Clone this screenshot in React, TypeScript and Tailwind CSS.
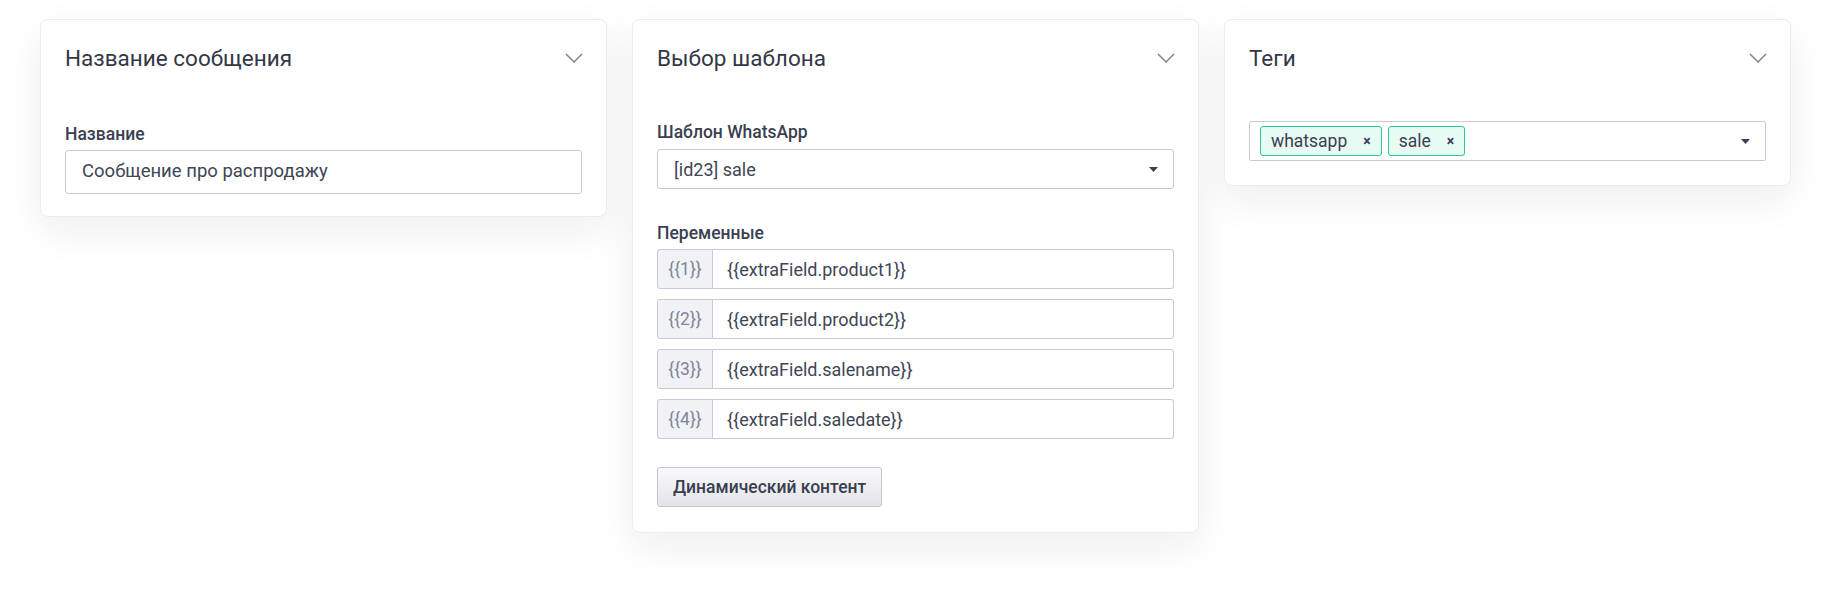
import React from "react";

const Chevron = () => (
	<svg width="18" height="10" viewBox="0 0 18 10" fill="none" className="mr-[-1px]">
		<polyline points="1,1 9,9 17,1" stroke="#7d8597" strokeWidth="1.5" />
	</svg>
);

const Caret = () => (
	<svg width="9" height="5" viewBox="0 0 9 5">
		<polygon points="0,0 9,0 4.5,5" fill="#3a3f51" />
	</svg>
);

function Card({ title, className, children }: { title: string; className?: string; children: React.ReactNode }) {
	return (
		<div
			className={
				"rounded-lg border border-[#ececf0] bg-white px-6 pt-6 shadow-[0_14px_40px_rgba(30,35,60,0.07)] " +
				(className ?? "")
			}
		>
			<div className="flex h-7 items-center justify-between">
				<h2 className="text-[22.5px] leading-7 text-[#333846]">{title}</h2>
				<Chevron />
			</div>
			{children}
		</div>
	);
}

const Label = ({ children }: { children: React.ReactNode }) => (
	<div className="text-[17.5px] font-medium leading-6 text-[#3a3f51]">{children}</div>
);

const variables = [
	{ key: "{{1}}", value: "{{extraField.product1}}" },
	{ key: "{{2}}", value: "{{extraField.product2}}" },
	{ key: "{{3}}", value: "{{extraField.salename}}" },
	{ key: "{{4}}", value: "{{extraField.saledate}}" },
];

function Tag({ name }: { name: string }) {
	return (
		<div className="flex h-[30px] items-center rounded-[3px] border border-[#2cc79c] bg-[#e7faf4] px-[10px]">
			<span className="text-[17.5px] text-[#3a3f51]">{name}</span>
			<span className="ml-4 text-[14px] font-bold leading-none text-[#3a3f51]">×</span>
		</div>
	);
}

export default function App() {
	return (
		<div className="min-h-[593px] bg-white font-['Roboto',sans-serif]">
			<div className="grid grid-cols-3 items-start gap-x-[25px] pl-10 pr-[42px] pt-[19px]">
				<Card title="Название сообщения" className="pb-[22px]">
					<div className="mt-[50px]">
						<Label>Название</Label>
						<div className="mt-1 flex h-11 items-center rounded-[3px] border border-[#c9cad5] px-4 text-[18.5px] text-[#404555]">
							Сообщение про распродажу
						</div>
					</div>
				</Card>

				<Card title="Выбор шаблона" className="pb-[25px]">
					<div className="mt-12">
						<Label>Шаблон WhatsApp</Label>
						<div className="mt-[5px] flex h-10 items-center justify-between rounded-[3px] border border-[#c9cad5] pl-4 pr-[15px] text-[18px] text-[#404555]">
							<span>[id23] sale</span>
							<Caret />
						</div>
					</div>
					<div className="mt-8">
						<Label>Переменные</Label>
						<div className="mt-1 flex flex-col gap-2.5">
							{variables.map((v) => (
								<div key={v.key} className="flex h-10 text-[18px]">
									<div className="flex w-14 shrink-0 items-center justify-center rounded-l-[3px] border border-[#c9cad5] bg-[#f1f2f5] text-[17.5px] text-[#80859a]">
										{v.key}
									</div>
									<div className="flex flex-1 items-center rounded-r-[3px] border border-l-0 border-[#c9cad5] pl-[14px] text-[#404555]">
										{v.value}
									</div>
								</div>
							))}
						</div>
					</div>
					<button className="mt-7 h-10 rounded-[3px] border border-[#c4c5cf] bg-gradient-to-b from-[#fafafc] to-[#e3e4e9] px-[15px] text-[17.5px] font-medium text-[#3a3f51]">
						Динамический контент
					</button>
				</Card>

				<Card title="Теги" className="pb-6">
					<div className="mt-[49px] flex h-10 items-center justify-between rounded-[2px] border border-[#c9cad5] pl-[10px] pr-[15px]">
						<div className="flex gap-1.5">
							<Tag name="whatsapp" />
							<Tag name="sale" />
						</div>
						<Caret />
					</div>
				</Card>
			</div>
		</div>
	);
}
